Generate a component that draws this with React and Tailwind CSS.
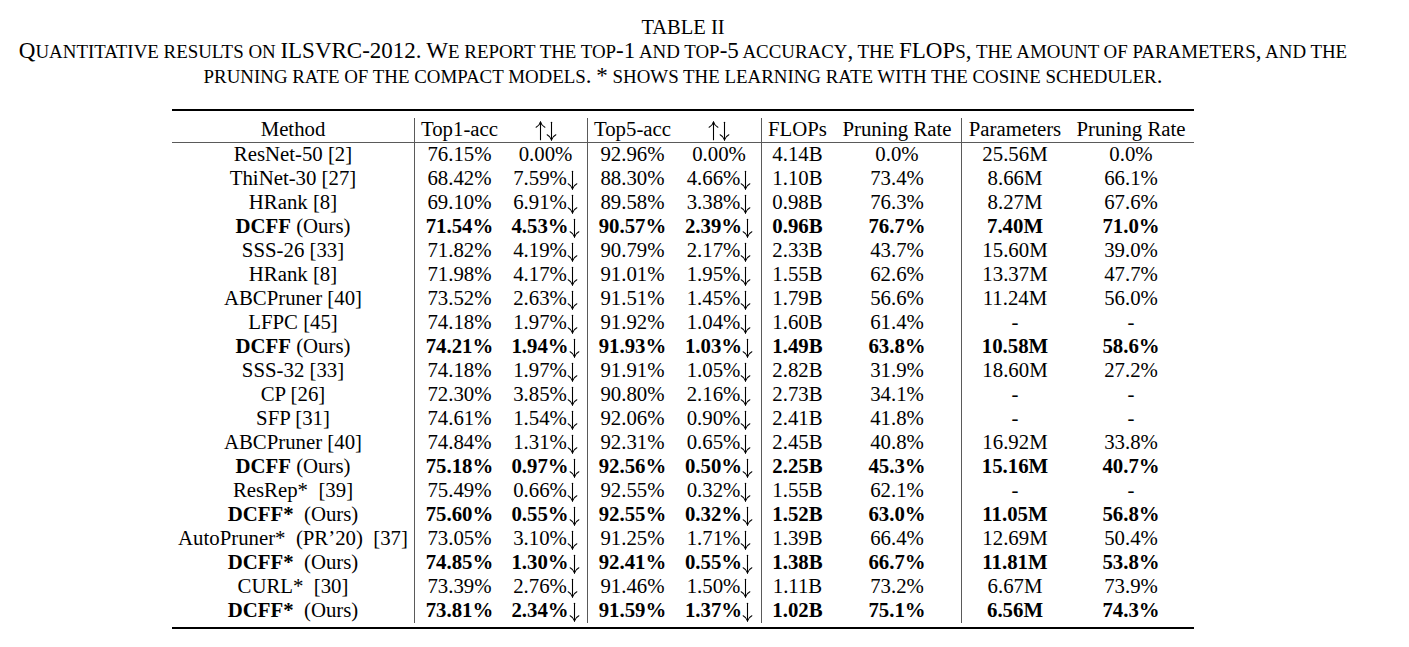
import React from "react";

const rows = [
  ["ResNet-50 [2]", "76.15%", "0.00%", "92.96%", "0.00%", "4.14B", "0.0%", "25.56M", "0.0%"],
  ["ThiNet-30 [27]", "68.42%", "7.59%↓", "88.30%", "4.66%↓", "1.10B", "73.4%", "8.66M", "66.1%"],
  ["HRank [8]", "69.10%", "6.91%↓", "89.58%", "3.38%↓", "0.98B", "76.3%", "8.27M", "67.6%"],
  ["DCFF", "71.54%", "4.53%↓", "90.57%", "2.39%↓", "0.96B", "76.7%", "7.40M", "71.0%"],
  ["SSS-26 [33]", "71.82%", "4.19%↓", "90.79%", "2.17%↓", "2.33B", "43.7%", "15.60M", "39.0%"],
  ["HRank [8]", "71.98%", "4.17%↓", "91.01%", "1.95%↓", "1.55B", "62.6%", "13.37M", "47.7%"],
  ["ABCPruner [40]", "73.52%", "2.63%↓", "91.51%", "1.45%↓", "1.79B", "56.6%", "11.24M", "56.0%"],
  ["LFPC [45]", "74.18%", "1.97%↓", "91.92%", "1.04%↓", "1.60B", "61.4%", "-", "-"],
  ["DCFF", "74.21%", "1.94%↓", "91.93%", "1.03%↓", "1.49B", "63.8%", "10.58M", "58.6%"],
  ["SSS-32 [33]", "74.18%", "1.97%↓", "91.91%", "1.05%↓", "2.82B", "31.9%", "18.60M", "27.2%"],
  ["CP [26]", "72.30%", "3.85%↓", "90.80%", "2.16%↓", "2.73B", "34.1%", "-", "-"],
  ["SFP [31]", "74.61%", "1.54%↓", "92.06%", "0.90%↓", "2.41B", "41.8%", "-", "-"],
  ["ABCPruner [40]", "74.84%", "1.31%↓", "92.31%", "0.65%↓", "2.45B", "40.8%", "16.92M", "33.8%"],
  ["DCFF", "75.18%", "0.97%↓", "92.56%", "0.50%↓", "2.25B", "45.3%", "15.16M", "40.7%"],
  ["ResRep*\u2002[39]", "75.49%", "0.66%↓", "92.55%", "0.32%↓", "1.55B", "62.1%", "-", "-"],
  ["DCFF*", "75.60%", "0.55%↓", "92.55%", "0.32%↓", "1.52B", "63.0%", "11.05M", "56.8%"],
  ["AutoPruner*\u2002(PR’20)\u2002[37]", "73.05%", "3.10%↓", "91.25%", "1.71%↓", "1.39B", "66.4%", "12.69M", "50.4%"],
  ["DCFF*", "74.85%", "1.30%↓", "92.41%", "0.55%↓", "1.38B", "66.7%", "11.81M", "53.8%"],
  ["CURL*\u2002[30]", "73.39%", "2.76%↓", "91.46%", "1.50%↓", "1.11B", "73.2%", "6.67M", "73.9%"],
  ["DCFF*", "73.81%", "2.34%↓", "91.59%", "1.37%↓", "1.02B", "75.1%", "6.56M", "74.3%"],
];

const header = ["Method", "Top1-acc", "↑↓", "Top5-acc", "↑↓", "FLOPs", "Pruning Rate", "Parameters", "Pruning Rate"];

// columns that start with a vertical rule
const ruled = [1, 3, 5, 7];

// thin math-style arrow, like \downarrow / \uparrow
function Arrow({ up }) {
  return (
    <svg
      viewBox="0 0 12 22"
      className={`inline-block h-[20px] w-[11px] align-[-5px] ${up ? "rotate-180" : ""}`}
      fill="none"
      stroke="currentColor"
      strokeWidth="1.2"
      strokeLinecap="round"
    >
      <path d="M6 1.5V20.5" />
      <path d="M1.2 15.2C3.6 16.4 5.2 18.4 6 20.8C6.8 18.4 8.4 16.4 10.8 15.2" />
    </svg>
  );
}

function withArrows(v) {
  if (!v.includes("↓") && !v.includes("↑")) return v;
  return v.split("").map((ch, i) =>
    ch === "↓" ? <Arrow key={i} /> : ch === "↑" ? <Arrow key={i} up /> : ch
  );
}

// hand-made small caps: lowercase runs become smaller capitals
function SmallCaps({ text }) {
  const parts = text.split(/([a-z ]+)/);
  return parts.map((p, i) =>
    /^[a-z ]+$/.test(p) ? (
      <span key={i} className="text-[18.9px]">
        {p.toUpperCase()}
      </span>
    ) : (
      <span key={i}>{p}</span>
    )
  );
}

function Cell({ col, children, className = "" }) {
  const line = ruled.includes(col) ? "border-l border-[#5a5a5a]" : "";
  return (
    <div className={`flex items-center justify-center whitespace-nowrap pb-[3px] ${line} ${className}`}>
      <span>{children}</span>
    </div>
  );
}

export default function App() {
  return (
    <div className="min-h-screen bg-white text-black" style={{ fontFamily: '"Liberation Serif", "Times New Roman", serif' }}>
      <div className="w-[1366px] pt-4">
        {/* Caption */}
        <div className="h-[22px] text-center text-[20.5px] leading-[22px]">TABLE II</div>
        <div className="text-center text-[23px] leading-[25px]">
          <div className="h-[25px] whitespace-nowrap">
            <SmallCaps text="Quantitative results on ILSVRC-2012. We report the top-1 and top-5 accuracy, the FLOPs, the amount of parameters, and the" />
          </div>
          <div className="h-[25px] whitespace-nowrap">
            <SmallCaps text="pruning rate of the compact models. * shows the learning rate with the cosine scheduler." />
          </div>
        </div>

        {/* Table */}
        <div className="mx-auto mt-[21px] w-[1022px] text-[20.8px]">
          <div className="h-[2px] bg-black" />
          <div className="h-[7px]" />
          <div className="grid grid-cols-[242px_90px_83px_90px_84px_72px_128px_107px_126px]">
            {header.map((h, i) => (
              <Cell key={i} col={i} className="h-[25px] border-b border-b-[#5a5a5a]">
                {withArrows(h)}
              </Cell>
            ))}
            {rows.map((r, ri) => {
              const ours = r[0].startsWith("DCFF");
              return r.map((v, ci) => (
                <Cell key={`${ri}-${ci}`} col={ci} className={`h-6 ${ours ? "font-bold" : ""}`}>
                  {ci === 0 && ours ? (
                    <>
                      {v}
                      <span className="font-normal">{v.endsWith("*") ? "\u2002(Ours)" : " (Ours)"}</span>
                    </>
                  ) : (
                    withArrows(v)
                  )}
                </Cell>
              ));
            })}
          </div>
          <div className="h-[4px]" />
          <div className="h-[2px] bg-black" />
        </div>
      </div>
    </div>
  );
}
